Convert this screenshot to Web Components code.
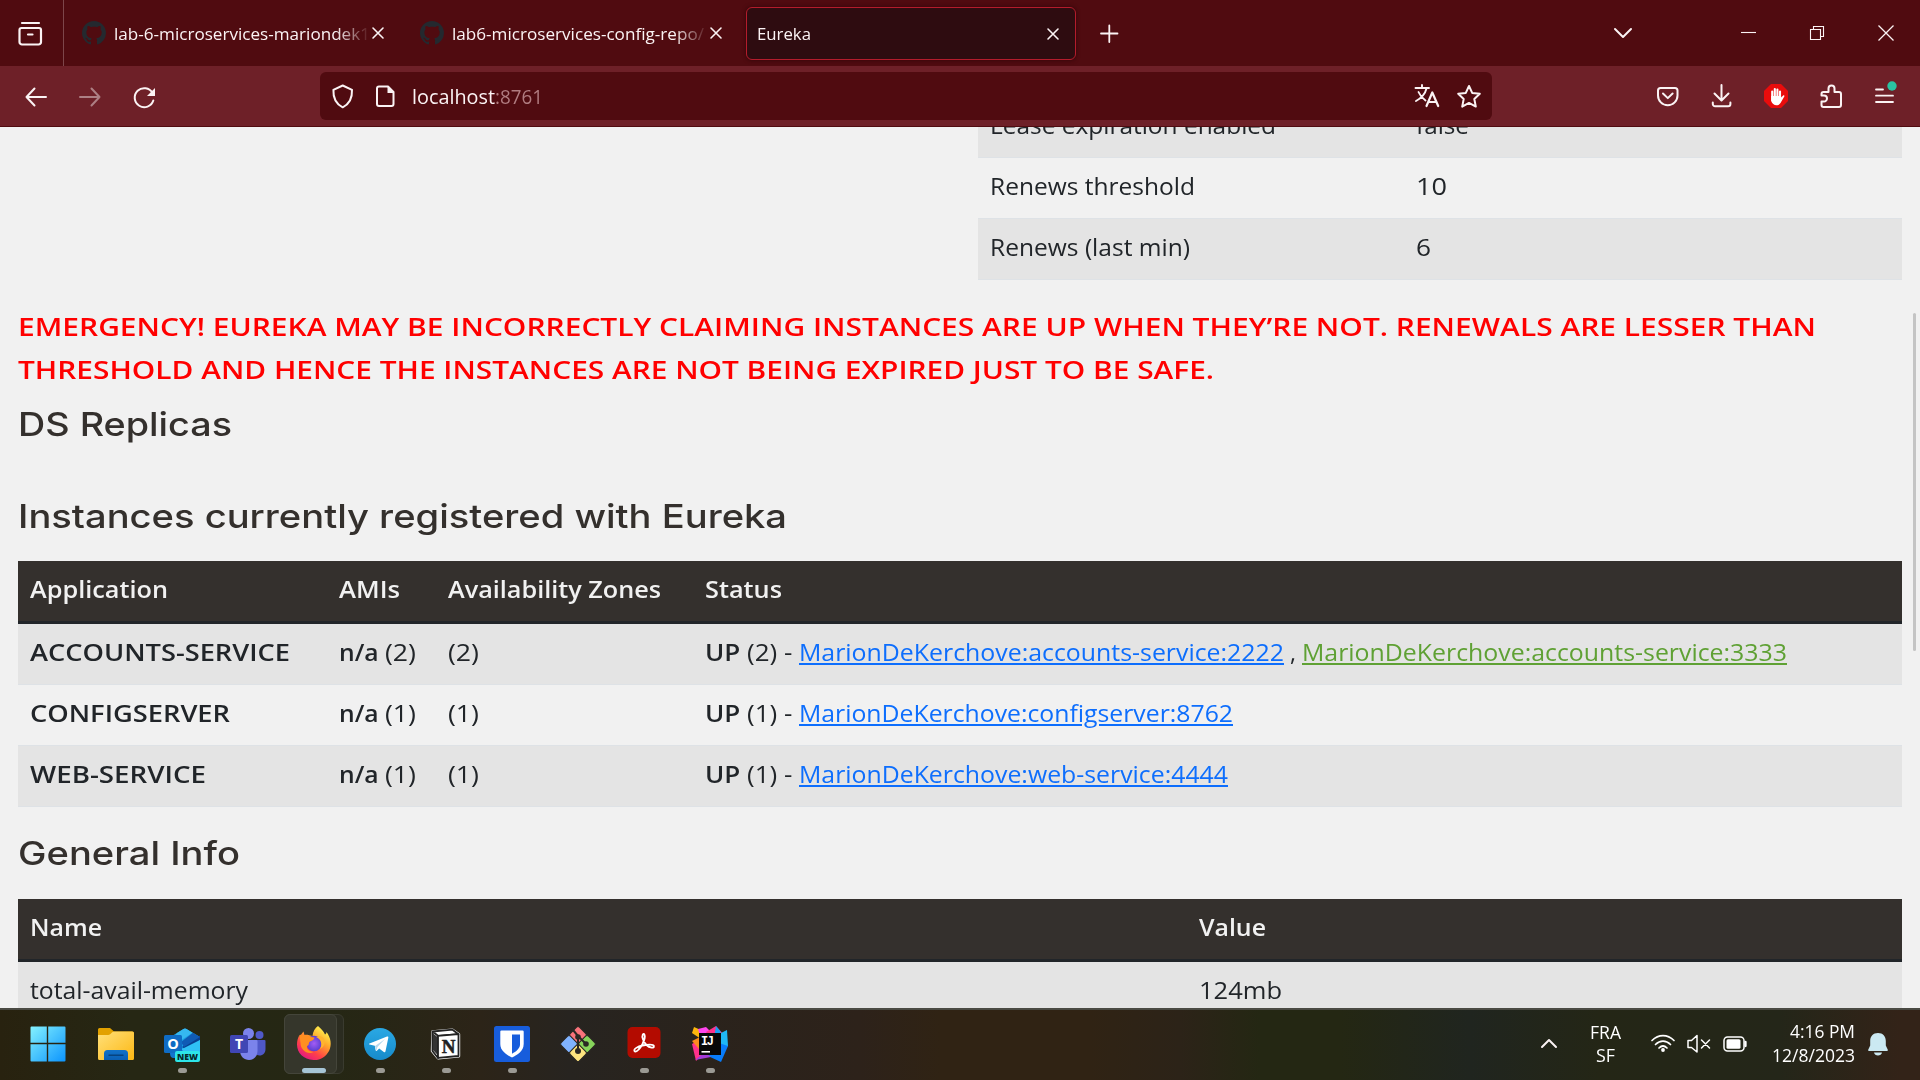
<!DOCTYPE html>
<html lang="en">
<head>
<meta charset="utf-8">
<title>Eureka</title>
<style>
html,body{margin:0;height:100%;overflow:hidden;background:#f1f1f1}
</style>
</head>
<body>
<desktop-screen></desktop-screen>
<script>
const define = (name, html, setup) => {
  const t = document.createElement('template');
  t.innerHTML = html;
  customElements.define(name, class extends HTMLElement {
    constructor() {
      super();
      this.attachShadow({mode: 'open'}).appendChild(t.content.cloneNode(true));
    }
    connectedCallback() { if (setup) setup(this); }
  });
};

/* Inline text widened or narrowed so that it spans the width given in "w". */
define('fit-text', `<style>:host{display:inline-block;white-space:pre;transform-origin:0 50%}</style><slot></slot>`, el => {
  const w = el.offsetWidth && el.getBoundingClientRect().width;
  if (!w) return;
  const target = +el.getAttribute('w');
  el.style.transform = 'scaleX(' + (target / w).toFixed(4) + ')';
  el.style.marginRight = (target - w).toFixed(2) + 'px';
});

/* Icon cell: "box" is the svg viewBox, drawn 1:1. */
define('ui-icon', `<style>:host{display:block;flex:none}svg{display:block;fill:none;stroke:#fbf3f4;stroke-width:2;stroke-linecap:round;stroke-linejoin:round;overflow:visible}</style><svg></svg>`, el => {
  const box = el.getAttribute('box').split(' ');
  const svg = el.shadowRoot.querySelector('svg');
  svg.setAttribute('viewBox', box.join(' '));
  svg.setAttribute('width', box[2]);
  svg.setAttribute('height', box[3]);
  svg.innerHTML = ICONS[el.getAttribute('name')];
});

const ICONS = {
  library: `<path d="M22 23h17M19.500 30a2 2 0 0 1 2-2h17.500a2 2 0 0 1 2 2v12a2.500 2.500 0 0 1-2.500 2.500h-16.500a2.500 2.500 0 0 1-2.500-2.500zM28 34.500h4.500" stroke-width="2.200"/>`,
  github: `<path transform="scale(1.5)" fill="#24292f" stroke="none" d="M8 0C3.58 0 0 3.58 0 8c0 3.54 2.29 6.53 5.47 7.59.4.07.55-.17.55-.38 0-.19-.01-.82-.01-1.49-2.010.37-2.530-.49-2.690-.94-.09-.23-.48-.94-.82-1.130-.28-.15-.68-.52-.01-.53.63-.01 1.080.58 1.230.82.72 1.210 1.870.87 2.330.66.07-.52.28-.87.51-1.070-1.780-.2-3.640-.89-3.640-3.950 0-.87.31-1.590.82-2.150-.08-.2-.36-1.020.08-2.120 0 0 .67-.21 2.200.82.64-.18 1.320-.27 2-.27s1.360.09 2 .27c1.530-1.040 2.200-.82 2.200-.82.44 1.100.16 1.920.08 2.120.51.56.82 1.270.82 2.150 0 3.070-1.870 3.750-3.650 3.950.29.25.54.73.54 1.480 0 1.070-.01 1.930-.01 2.200 0 .21.15.46.55.38A8.010 8.010 0 0 0 16 8c0-4.420-3.580-8-8-8z"/>`,
  close: `<path d="M1 1l10 10M11 1L1 11" stroke-width="1.600"/>`,
  plus: `<path d="M1101 33.500h16.500M1109.300 25.500v16.500" stroke-width="1.800"/>`,
  window: `<path d="M1615 29l8 8 8-8"/><g stroke-width="1.100" stroke-linecap="butt"><path d="M1741 32.500h15"/><path d="M1810.500 29.500h10v10h-10zM1813.500 29v-2.500h10v10h-2.500" stroke-linejoin="miter"/><path d="M1878.500 25.500l15 15M1893.500 25.500l-15 15" stroke-width="1.300"/></g>`,
  nav: `<path d="M46 97H26.500M34.500 88.500L26.500 97l8 8.500"/><path d="M80 97h19.500M91.500 88.500l8 8.500-8 8.500" opacity=".45"/><path d="M152.500 93a9.500 9.500 0 1 0 .8 7.500"/><path d="M155 88v8h-8z" fill="#fbf3f4" stroke="none"/>`,
  site: `<path d="M342.700 85.500l9.300 4.300c.3 7-.9 13.500-9.300 17.500-8.400-4-9.600-10.500-9.300-17.500z"/><path d="M379 86.500h9l5.500 5.500v12a2 2 0 0 1-2 2h-12.500a2 2 0 0 1-2-2v-15.500a2 2 0 0 1 2-2z"/><path d="M387.500 86l6.500 7h-6.500z" fill="#fbf3f4" stroke="none"/>`,
  urlend: `<path d="M1415.500 88h13.500M1422 85v3M1426.500 88.500c-1.500 6-5 9.500-10.500 12.500M1418.500 92c1.500 3.500 4 6.500 7 8.500" stroke-width="1.900"/><path d="M1426.500 106l5.800-13.500 5.900 13.500M1428.500 102h7.500" stroke-width="2.200"/><path d="M1469 86l3.200 6.900 7.600 .9-5.500 5.200 1.500 7.600-6.800-3.700-6.800 3.700 1.500-7.600-5.500-5.200 7.600-.9z"/>`,
  tools: `<path d="M1660.500 88h14.500a2.500 2.500 0 0 1 2.500 2.500v5a9.750 9.750 0 0 1-19.500 0v-5a2.500 2.500 0 0 1 2.500-2.500zM1663 93.500l4.800 4.600 4.800-4.600"/><path d="M1721.500 85v15M1714.500 93.500l7 7 7-7M1712.800 102.500v1.500a2.300 2.300 0 0 0 2.300 2.300h13a2.300 2.300 0 0 0 2.300-2.300v-1.500"/>
  <path d="M1771 84h10l7 7v10l-7 7h-10l-7-7v-10z" fill="#e90c0c" stroke="none"/><path d="M1772.200 91.500v9M1774.800 89v9M1777.400 89.500v9M1780 91.500v8" stroke="#fff" stroke-width="2.100"/><path d="M1771.100 96h10v1.500l1.800-1.800c1-.8 1.900-.1 1.400.8l-3.800 6.500c-2.400 4-8.400 2.300-9.200-2z" fill="#fff" stroke="none"/>
  <path d="M1823.500 92h5v-3.500a3 3 0 0 1 6 0v3.500h4.500a2 2 0 0 1 2 2v11a2 2 0 0 1-2 2h-15.500a2 2 0 0 1-2-2v-3.500h2.500a3 3 0 0 0 0-6h-2.500v-1.500a2 2 0 0 1 2-2z"/><path d="M1876 89.500h7M1876 95.700h17M1876 102h17" stroke-width="1.800"/><circle cx="1892" cy="86" r="4.700" fill="#2ac3a2" stroke="none"/>`,
  tray: `<path d="M1542 1047l7-7 7 7"/>`,
  status: `<g stroke="#fff"><path d="M1652 1040.500c6.500-6.500 15.500-6.500 22 0M1655.500 1044.500c4.500-4.500 10.500-4.500 15 0M1659 1048c2.500-2.500 5.500-2.500 8 0" stroke-width="1.700"/><circle cx="1663" cy="1050" r="1.900" fill="#fff" stroke="none"/><path d="M1688 1040.500h3.500l5.500-5v16.500l-5.500-4.500h-3.500zM1701.500 1040l8 8M1709.500 1040l-8 8" stroke-width="1.500"/><rect x="1724" y="1037" width="20" height="14" rx="3.500" stroke-width="1.500"/><rect x="1726.500" y="1039.300" width="14" height="9.400" rx="1.500" fill="#fff" stroke="none"/><path d="M1745.500 1042v4" stroke-width="2.300"/></g>`,
  bell: `<path d="M1878 1033c-5 0-7.800 3.500-7.800 8v4.500l-2 4.300c-.3.700 0 1.200.8 1.200h18c.8 0 1.100-.5.800-1.200l-2-4.300v-4.500c0-4.500-2.800-8-7.800-8zM1874 1052.500h8c-.5 4-7.500 4-8 0z" fill="#cbe9f2" stroke="none"/>`,
  start: `<defs><linearGradient id="s" x1="0" y1="0" x2="36" y2="36" gradientUnits="userSpaceOnUse"><stop stop-color="#86f3ff"/><stop offset="1" stop-color="#0a93fd"/></linearGradient></defs><path d="M0.500 1.500a1 1 0 0 1 1-1H16.800V16.800H.5zM18.200.5H34.500a1 1 0 0 1 1 1V16.800H18.200zM.5 18.200H16.800V35.500H1.500a1 1 0 0 1-1-1zM18.200 18.200H35.500V34.500a1 1 0 0 1-1 1H18.200z" fill="url(#s)" stroke="none"/>`,
  explorer: `<defs><linearGradient id="e" x1="0" y1="0" x2="1" y2="1"><stop stop-color="#ffe07a"/><stop offset="1" stop-color="#fdb813"/></linearGradient><linearGradient id="e2" x2="0" y2="1"><stop stop-color="#1272c8"/><stop offset="1" stop-color="#0a5fb4"/></linearGradient></defs><g stroke="none"><path d="M0 10V3.500a1.500 1.500 0 0 1 1.500-1.500h10.500l4 3.500h18a2 2 0 0 1 2 2v3z" fill="#e2a100"/><path d="M0 9h10.500c1.500 0 4-3.500 5.500-3.500h18.500a1.500 1.500 0 0 1 1.500 1.500v25.500a1.500 1.500 0 0 1-1.500 1.500h-33a1.500 1.500 0 0 1-1.500-1.500z" fill="url(#e)"/><path d="M6 34v-6.500a3.500 3.500 0 0 1 3.500-3.500h17a3.500 3.500 0 0 1 3.500 3.500v6.500z" fill="url(#e2)"/></g><path d="M11 29.300h14" stroke="#07437f" stroke-width="1.400"/>`,
  outlook: `<g stroke="none"><path d="M8 10l11.500-7a3 3 0 0 1 3 0L36 11v8l-18 9-10-7z" fill="#1b9de2"/><path d="M13 7l6.500-4a3 3 0 0 1 3 0l6 3.700L16 15l-6-3z" fill="#35b8f1"/><path d="M18 21L36 9.500v4.500L23 24z" fill="#083f8f"/><path d="M17 16l12-9.300L36 11 20 21z" fill="#0f5bb5"/><path d="M36 14v14c0 2-1.500 4-4 4H12c-4 0-4-3-4-6l12-4z" fill="#2fc0f5"/><path d="M6 22h10l10 10H10c-3 0-4-2-4-5z" fill="#1275cd"/><rect y="9" width="18" height="18" rx="1.500" fill="#0f6cc4"/><rect x="11" y="25" width="25" height="11" rx="2" fill="#2de5e8"/></g><text x="9" y="23.300" text-anchor="middle" font-family="Open Sans,sans-serif" font-weight="700" font-size="14.500" fill="#fff" stroke="none">O</text><text x="23.500" y="33.800" text-anchor="middle" font-family="Open Sans,sans-serif" font-weight="800" font-size="9.200" textLength="21" lengthAdjust="spacingAndGlyphs" fill="#06282c" stroke="none">NEW</text>`,
  teams: `<g stroke="none"><circle cx="29.500" cy="9" r="4" fill="#5059c9"/><path d="M24 14h10.500a1 1 0 0 1 1 1v8c0 4-2.500 6.500-6 6.500s-5.500-3-5.500-6z" fill="#4f58c8"/><circle cx="18.500" cy="7.500" r="5.500" fill="#7b83eb"/><path d="M10 14h16.500a1 1 0 0 1 1 1v10c0 5-3.500 9-8.500 9s-9-4-9-9z" fill="#7b83eb"/><rect y="9" width="18" height="18" rx="1.500" fill="#4046b4"/></g><text x="9" y="23" text-anchor="middle" font-family="Open Sans,sans-serif" font-weight="700" font-size="14" fill="#fff" stroke="none">T</text>`,
  firefox: `<defs><linearGradient id="f" x1=".85" y1=".1" x2=".25" y2="1"><stop stop-color="#fff44f"/><stop offset=".35" stop-color="#ffa52a"/><stop offset=".7" stop-color="#ff4048"/><stop offset="1" stop-color="#e31587"/></linearGradient><radialGradient id="f2"><stop stop-color="#a35cf5"/><stop offset="1" stop-color="#5a3fd0"/></radialGradient></defs><g stroke="none"><path d="M22 0c3 3 5.500 5 7 8.500 1-.5 1.500-1.500 1.500-2.500 4.500 6 5.500 13 2.500 19-3.500 6.500-9.500 9.500-15.500 9C7.500 33.500 1 27 1 18.500c0-4 1-7 2.500-9.500l.5 2c1-2.500 2-4 3.500-5.500L8.500 9c1.500-.3 3-.2 4.500.3L16.500 10C17 5.500 19 2 22 0z" fill="url(#f)"/><circle cx="18" cy="17.500" r="7.800" fill="url(#f2)"/><path d="M3.500 9c3-1 6 .5 8.500.5 2 1 4 2 6.500 2 0 2-2.500 3-4.500 4-1.500 1-1 2.500-1.500 3.500-3.500 1.500-1 6.500 5 7-6 3-13-2-13-9z" fill="#ff8f20"/><path d="M20 11c5.500 2 6.500 8 4 12 4.500-2 6-7 3.500-11-2-2.500-5-2-7.500-1z" fill="#ffb52e"/></g>`,
  telegram: `<defs><linearGradient id="t" x2="0" y2="1"><stop stop-color="#2aa8e4"/><stop offset="1" stop-color="#178bcb"/></linearGradient></defs><circle cx="18" cy="18" r="16" fill="url(#t)" stroke="none"/><path d="M7.500 17.500L25 10.500c1-.3 1.500.2 1.300 1.300l-2.800 13.500c-.2 1-.9 1.200-1.700.7l-4.600-3.400-2.300 2.200c-.5.500-1.200.3-1.300-.5l-.8-4.500-5.300-1.300c-.8-.3-.7-.7 0-1z" fill="#fff" stroke="none"/><path d="M13 20l10-7-7.500 8-1.200 3.500z" fill="#b5d9ee" stroke="none"/>`,
  notion: `<path d="M4.500 5.500l20-1.800 6.500 4.500v22L10 32.300l-6-7.300z" fill="#fff" stroke="#fff" stroke-width="2.400"/><path d="M4.500 5.500l20-1.800 6 4.500L10 9.800zM4.500 5.500V25l5.500 7V9.800z" fill="#fff" stroke="#222" stroke-width="1.800"/><path d="M5 7.500l4.500 3.500v18L5 24z" fill="#333" stroke="none"/><path d="M10 9.800l20.500-1.600V30L10 31.800z" fill="#fff" stroke="#222" stroke-width="1.800"/><text x="20.500" y="27" text-anchor="middle" font-family="Liberation Serif,serif" font-weight="700" font-size="19" fill="#222" stroke="#222" stroke-width=".5">N</text>`,
  bitwarden: `<rect width="36" height="36" rx="2.500" fill="#175ddc" stroke="none"/><path d="M7.500 4.500h21a1.200 1.200 0 0 1 1.200 1.200V18c0 7-6.500 11-11.700 13.500C12.800 29 6.300 25 6.300 18V5.700a1.200 1.200 0 0 1 1.200-1.200z" fill="#fff" stroke="none"/><path d="M18 8.500h8V18.500c0 4-4 7-8 9.200z" fill="#175ddc" stroke="none"/>`,
  git: `<g stroke="#2b2824" stroke-width="1"><rect x="11.500" y="2.500" width="13" height="13" rx="2" transform="rotate(45 18 9)" fill="#f9737b"/><rect x="2.500" y="11.500" width="13" height="13" rx="2" transform="rotate(45 9 18)" fill="#80b3ff"/><rect x="20.500" y="11.500" width="13" height="13" rx="2" transform="rotate(45 27 18)" fill="#87d45b"/><rect x="11.500" y="20.500" width="13" height="13" rx="2" transform="rotate(45 18 27)" fill="#fde47f"/></g><path d="M13 4l5 6v15M18 10l8 8" stroke="#2b2824" stroke-width="2"/><circle cx="18" cy="11" r="2.800" fill="#2b2824" stroke="none"/><circle cx="26" cy="18" r="2.800" fill="#2b2824" stroke="none"/><circle cx="18" cy="25" r="3" fill="#2b2824" stroke="none"/>`,
  acrobat: `<rect x="1.500" y="1" width="33" height="31" rx="5" fill="#b30b00" stroke="none"/><path d="M8.500 25c-1-2 3-4.500 8-5.500s11-1.500 11.500.8c.5 2-4.500 1.700-7.500-1.300s-5-8-3.700-10.500c1.200-1.500 2.600.5 1.800 4-1 4-4 9-6 11-2 2.200-3.500 2.500-4.100 1.500z" stroke="#fff" stroke-width="1.800"/>`,
  idea: `<g stroke="none"><path d="M2 1l9 4-2 8-9-6z" fill="#fdb60d"/><path d="M6 3l8-2 6 6-10 9z" fill="#ff45ed"/><path d="M14 6l10-6 8 9-9 12z" fill="#ff318c"/><path d="M24 0l5 6-7 6z" fill="#16a0f5"/><path d="M35 4l1 16-10 4-3-14z" fill="#1fb7f5"/><path d="M36 20l-7 16-13-6 8-14z" fill="#087cfa"/><path d="M0 18l7-4 6 12-9 9z" fill="#ff318c"/><path d="M0 15l8-4-1 12z" fill="#fc8b1d"/><path d="M3 34l10-8 6 5z" fill="#a33bd8"/><rect x="7" y="7" width="22" height="22" fill="#080808"/><path d="M9.500 25h8.500v1.600H9.500z" fill="#fff"/></g><text x="9" y="18.500" font-family="Liberation Mono,monospace" font-weight="700" font-size="12" textLength="13" fill="#fff" stroke="none">IJ</text>`
};

define('browser-tab', `<style>
:host{display:flex;flex:none;box-sizing:border-box;width:338px;height:66px;align-items:center;padding-left:18px}
:host([selected]){width:330px;height:53px;margin:7px 0 0 6px;padding-left:10px;background:#2e0c10;border:1px solid #b41c2c;border-radius:6px;box-shadow:0 0 4px #2e0609}
::slotted(ui-icon){margin:-1px 8px 0 0}
.t{width:256px;overflow:hidden;-webkit-mask-image:linear-gradient(90deg,#000 222px,transparent 256px);mask-image:linear-gradient(90deg,#000 222px,transparent 256px)}
:host([selected]) .t{width:288px;-webkit-mask-image:none;mask-image:none}
ui-icon[name=close]{margin-left:2px}
</style><slot name="icon"></slot><div class="t"><slot></slot></div><ui-icon name="close" box="0 0 12 12"></ui-icon>`);

define('tab-strip', `<style>:host{display:flex;height:66px;background:#500b10;color:#fbf3f4;font:17px "Open Sans",sans-serif}
.lib{border-right:1px solid #7d464a}.sp{flex:1}</style>
<ui-icon class="lib" name="library" box="0 0 63 66"></ui-icon>
<browser-tab><ui-icon slot="icon" name="github" box="0 0 24 24"></ui-icon><fit-text w="256">lab-6-microservices-mariondek1</fit-text></browser-tab>
<browser-tab><ui-icon slot="icon" name="github" box="0 0 24 24"></ui-icon><fit-text w="252">lab6-microservices-config-repo/</fit-text></browser-tab>
<browser-tab selected><fit-text w="54">Eureka</fit-text></browser-tab>
<ui-icon name="plus" box="1076 0 64 66"></ui-icon><div class="sp"></div>
<ui-icon name="window" box="1600 0 320 66"></ui-icon>`);

define('nav-bar', `<style>:host{display:flex;height:60px;background:#6e2028;border-bottom:1px solid #500b10;color:#fbf3f4;font:20px "Open Sans",sans-serif}
.url{display:flex;width:1172px;height:48px;margin-top:6px;background:#500b10;border-radius:6px}
.txt{flex:1;line-height:49px;padding-left:12px}.p{color:#b07c80}</style>
<ui-icon name="nav" box="0 66 320 60"></ui-icon>
<div class="url"><ui-icon name="site" box="320 72 80 48"></ui-icon><div class="txt"><fit-text w="83">localhost</fit-text><fit-text class="p" w="48">:8761</fit-text></div><ui-icon name="urlend" box="1400 72 92 48"></ui-icon></div>
<ui-icon name="tools" box="1492 66 428 60"></ui-icon>`);

define('data-row', `<style>
:host{display:grid;grid-template-columns:var(--cols);height:60px;border-bottom:1px solid #dee2e6;line-height:55px}
:host([odd]){background:#e4e4e4}
:host([head]){background:#34302d;color:#f1f1f1;font-weight:600;border-bottom:3px solid #212529}
::slotted(*){padding-left:12px;white-space:nowrap}
</style><slot></slot>`);

define('data-table', `<style>:host{display:block;color:#212529;font:24px "Open Sans",sans-serif}</style><slot></slot>`);

define('page-heading', `<style>:host{display:block;color:#34302d;font:500 33px/44px Inter,sans-serif}</style><slot></slot>`);

define('eureka-page', `<style>
:host{display:flex;height:881px;background:#f1f1f1;overflow:hidden}
main{width:1884px;margin-left:18px;margin-top:-30px}
.bar{width:3px;height:338px;margin:186px 0 0 11px;background:#c4c4c4;border-radius:2px}
.t1{--cols:426px 1fr;margin-left:960px}
.t2{--cols:309px 109px 257px 1fr;margin-top:22px}
.t3{--cols:1169px 1fr;margin-top:24px}
.warn{margin-top:25px;color:#f00;font:600 26px/43px "Open Sans",sans-serif;white-space:nowrap}
.h1{margin-top:11px}.h2{margin-top:48px}.h3{margin-top:24px}
.h2+.t2{margin-top:23px}
b{font-weight:600}
a{color:#0d6efd}a.g{color:#5fa134}
a fit-text{text-decoration:underline;text-decoration-thickness:1.500px;text-underline-offset:2px;text-decoration-skip-ink:auto}
</style>
<main>
<data-table class="t1">
<data-row odd><span><fit-text w="286">Lease expiration enabled</fit-text></span><span><fit-text w="53">false</fit-text></span></data-row>
<data-row><span><fit-text w="205">Renews threshold</fit-text></span><span><fit-text w="31">10</fit-text></span></data-row>
<data-row odd><span><fit-text w="200">Renews (last min)</fit-text></span><span><fit-text w="15">6</fit-text></span></data-row>
</data-table>
<div class="warn"><fit-text w="1798">EMERGENCY! EUREKA MAY BE INCORRECTLY CLAIMING INSTANCES ARE UP WHEN THEY’RE NOT. RENEWALS ARE LESSER THAN</fit-text><br><fit-text w="1196">THRESHOLD AND HENCE THE INSTANCES ARE NOT BEING EXPIRED JUST TO BE SAFE.</fit-text></div>
<page-heading class="h1"><fit-text w="214">DS Replicas</fit-text></page-heading>
<page-heading class="h2"><fit-text w="769">Instances currently registered with Eureka</fit-text></page-heading>
<data-table class="t2">
<data-row head><span><fit-text w="138">Application</fit-text></span><span><fit-text w="61">AMIs</fit-text></span><span><fit-text w="213">Availability Zones</fit-text></span><span><fit-text w="77">Status</fit-text></span></data-row>
<data-row odd><b><fit-text w="260">ACCOUNTS-SERVICE</fit-text></b><span><b><fit-text w="46">n/a </fit-text></b><fit-text w="31">(2)</fit-text></span><span><fit-text w="31">(2)</fit-text></span><span><b><fit-text w="42">UP </fit-text></b><fit-text w="52">(2) - </fit-text><a><fit-text w="485">MarionDeKerchove:accounts-service:2222</fit-text></a><fit-text w="18"> , </fit-text><a class="g"><fit-text w="485">MarionDeKerchove:accounts-service:3333</fit-text></a></span></data-row>
<data-row><b><fit-text w="200">CONFIGSERVER</fit-text></b><span><b><fit-text w="46">n/a </fit-text></b><fit-text w="31">(1)</fit-text></span><span><fit-text w="31">(1)</fit-text></span><span><b><fit-text w="42">UP </fit-text></b><fit-text w="52">(1) - </fit-text><a><fit-text w="434">MarionDeKerchove:configserver:8762</fit-text></a></span></data-row>
<data-row odd><b><fit-text w="176">WEB-SERVICE</fit-text></b><span><b><fit-text w="46">n/a </fit-text></b><fit-text w="31">(1)</fit-text></span><span><fit-text w="31">(1)</fit-text></span><span><b><fit-text w="42">UP </fit-text></b><fit-text w="52">(1) - </fit-text><a><fit-text w="429">MarionDeKerchove:web-service:4444</fit-text></a></span></data-row>
</data-table>
<page-heading class="h3"><fit-text w="222">General Info</fit-text></page-heading>
<data-table class="t3">
<data-row head><span><fit-text w="72">Name</fit-text></span><span><fit-text w="67">Value</fit-text></span></data-row>
<data-row odd><span><fit-text w="218">total-avail-memory</fit-text></span><span><fit-text w="83">124mb</fit-text></span></data-row>
</data-table>
</main><div class="bar"></div>`);

define('task-button', `<style>
:host{display:flex;flex:none;flex-direction:column;align-items:center;box-sizing:border-box;width:66px;height:70px;padding-top:16px;position:relative}
i{width:9px;height:5px;border-radius:3px;margin-top:6px;background:#9b9a94;visibility:hidden;position:relative}
:host([open]) i{visibility:visible}
:host([active]) i{width:24px;background:#a6c5d6}
.bg{display:none;position:absolute;left:3px;top:4px;width:53px;height:60px;box-sizing:border-box;border:1px solid #44453a;border-radius:6px;background:#35362b}
.bg.b{width:60px;background:#2b2c20;border-color:#3a3b2f}
:host([active]) .bg{display:block}
ui-icon{position:relative}
</style><div class="bg b"></div><div class="bg"></div><ui-icon box="0 0 36 36"></ui-icon><i></i>`);

define('task-bar', `<style>
:host{display:flex;box-sizing:border-box;height:72px;border-top:2px solid #4a4a43;color:#fff;font:18px "Open Sans",sans-serif;
background:linear-gradient(90deg,#28220f 0,#262714 130px,#252714 330px,#2c2418 480px,#272420 570px,#2a231c 700px,#2d221a 860px,#302314 940px,#302314 1090px,#2c2318 1180px,#242713 1260px,#242713 1340px,#20251f 1470px,#242616 1600px,#242619 1780px,#332318 1900px)}
.apps{display:flex;padding-left:17px}
.start{margin-left:-2px;margin-right:2px}
.sp{flex:1}
.lang{width:60px;text-align:center;line-height:23px;padding-top:11px;margin-left:-1px;margin-right:1px}
.clock{width:100px;text-align:right;line-height:24px;padding-top:9px}
</style><div class="apps"></div><div class="sp"></div>
<ui-icon name="tray" box="1530 1010 47 70"></ui-icon>
<div class="lang"><fit-text w="31">FRA</fit-text><br><fit-text w="19">SF</fit-text></div>
<ui-icon name="status" box="1637 1010 118 70"></ui-icon>
<div class="clock"><fit-text w="65">4:16 PM</fit-text><br><fit-text w="83">12/8/2023</fit-text></div>
<ui-icon name="bell" box="1855 1010 65 70"></ui-icon>`, el => {
  const apps = el.shadowRoot.querySelector('.apps');
  for (const [name, state] of [['start',''],['explorer',''],['outlook','open'],['teams',''],['firefox','active'],['telegram','open'],['notion','open'],['bitwarden','open'],['git',''],['acrobat','open'],['idea','open']]) {
    const b = document.createElement('task-button');
    b.shadowRoot.querySelector('ui-icon').setAttribute('name', name);
    b.className = name;
    if (state) b.setAttribute('open', '');
    if (state === 'active') b.setAttribute('active', '');
    apps.appendChild(b);
  }
});

define('desktop-screen', `<style>:host{display:block;width:1920px;height:1080px;overflow:hidden}</style>
<tab-strip></tab-strip><nav-bar></nav-bar><eureka-page></eureka-page><task-bar></task-bar>`);
</script>
</body>
</html>
